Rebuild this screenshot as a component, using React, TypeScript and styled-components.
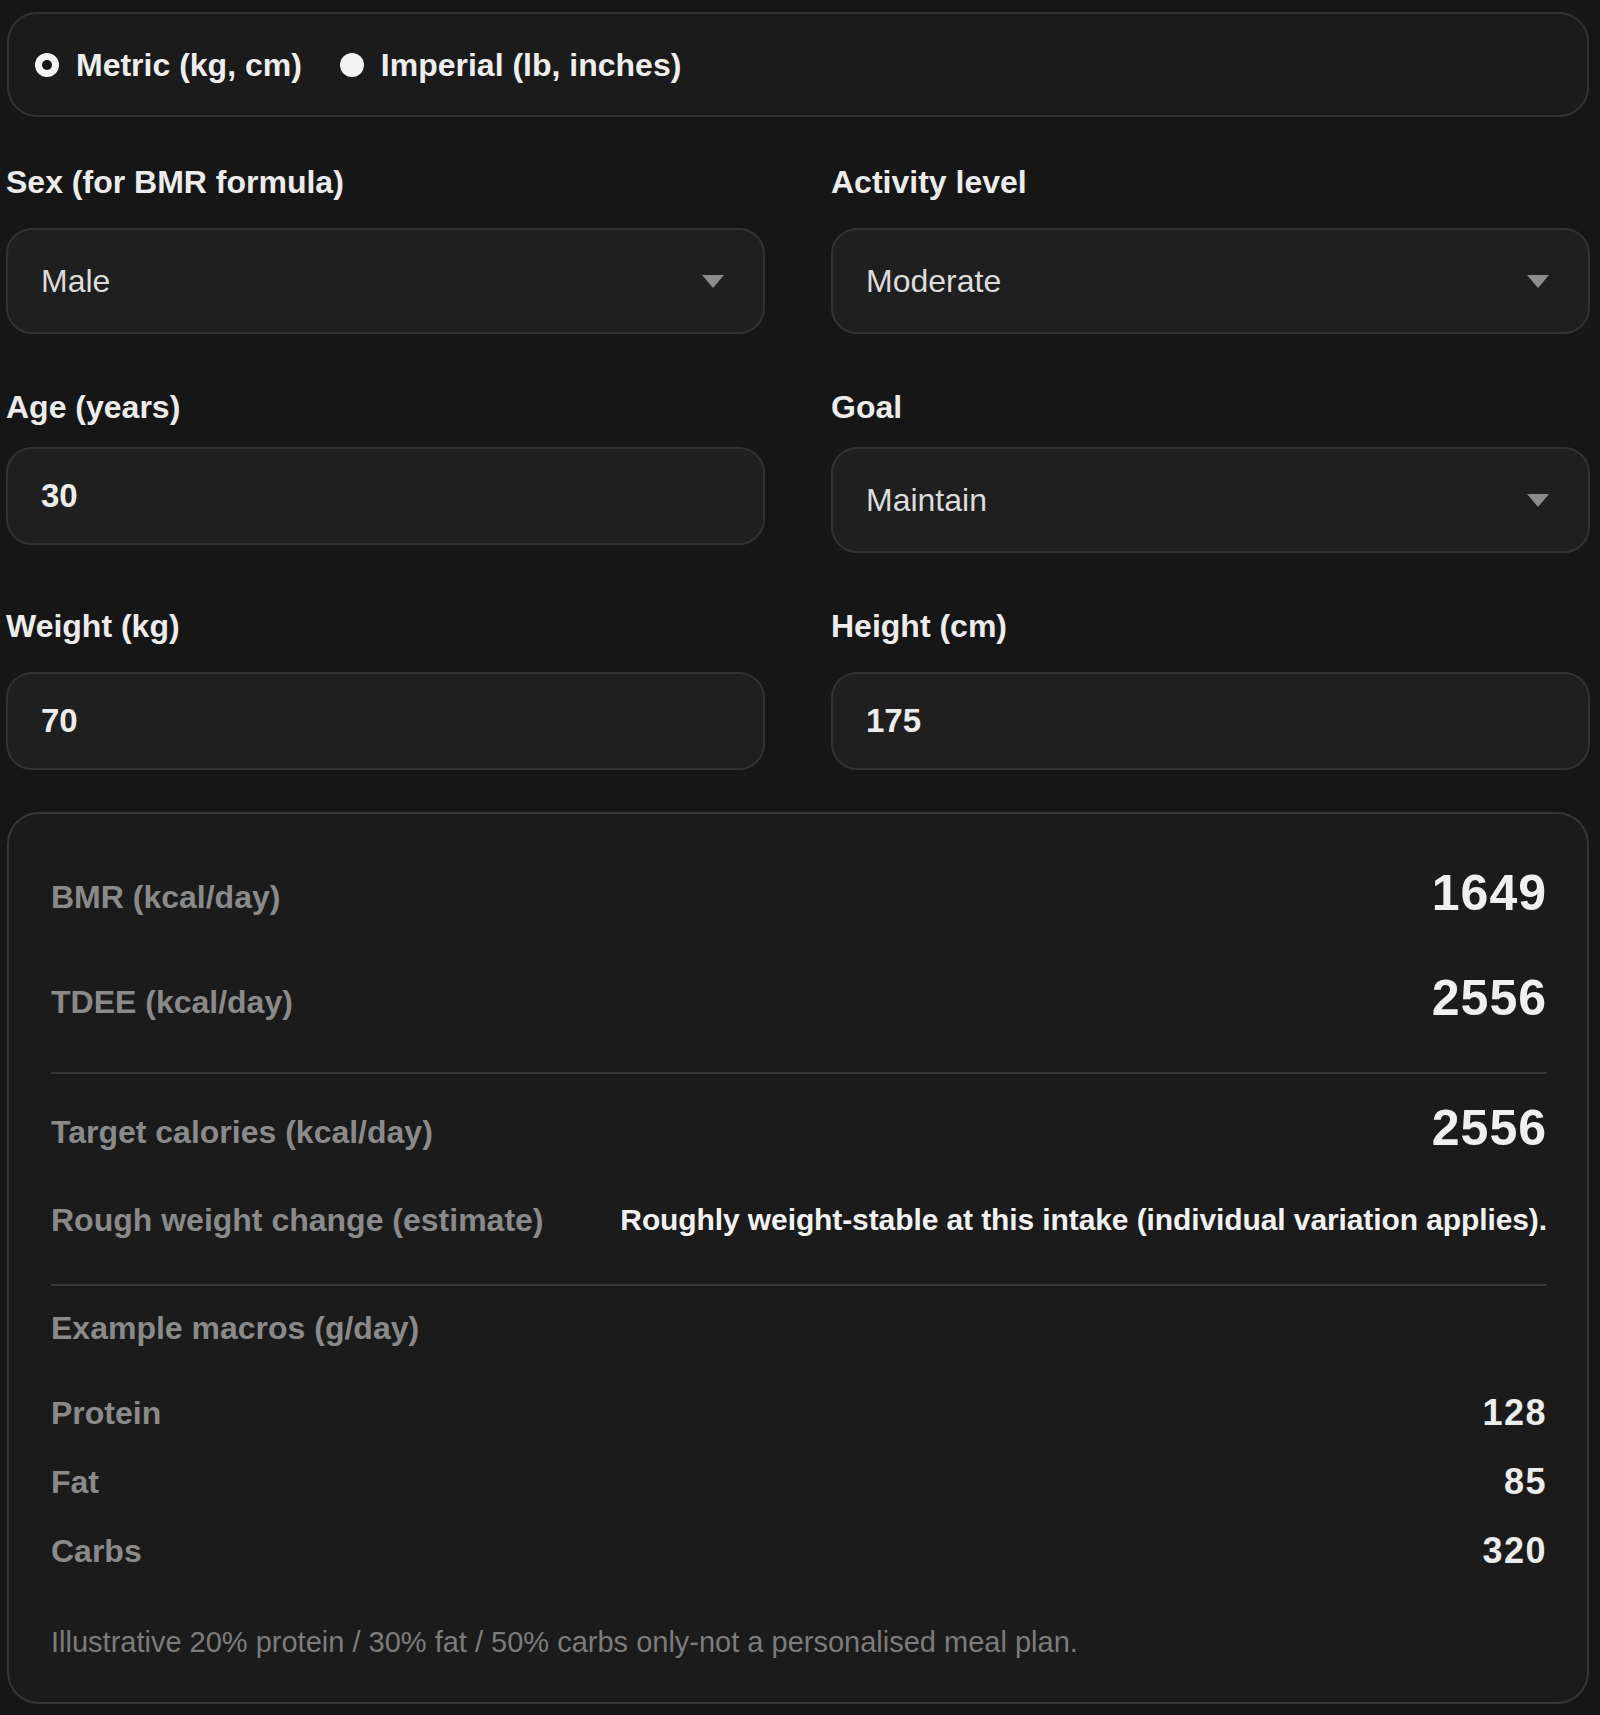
import React from "react";
import styled, { createGlobalStyle } from "styled-components";

const GlobalStyle = createGlobalStyle`
  html, body {
    margin: 0;
    padding: 0;
    background: #161616;
  }
  body {
    font-family: "Liberation Sans", Arial, sans-serif;
    color: #ececec;
    -webkit-font-smoothing: antialiased;
  }
  * { box-sizing: border-box; }
`;

const Page = styled.div`
  width: 1590px;
  min-height: 1715px;
  padding: 12px 0 0 6px;
  display: flex;
  flex-direction: column;
`;

const UnitBar = styled.div`
  height: 105px;
  margin-left: 1px;
  width: 1582px;
  border: 2px solid #333333;
  border-radius: 30px;
  background: #1b1b1b;
  display: flex;
  align-items: center;
  padding: 0 26px;
`;

const RadioOption = styled.label<{ $first?: boolean }>`
  display: flex;
  align-items: center;
  gap: 17px;
  margin-left: ${(p) => (p.$first ? "0" : "38px")};
  font-size: 32px;
  font-weight: 700;
  line-height: 40px;
  color: #eeeeee;
  cursor: pointer;
`;

const RadioDot = styled.span<{ $checked?: boolean }>`
  width: 24px;
  height: 24px;
  border-radius: 50%;
  background: #f4f4f4;
  display: flex;
  align-items: center;
  justify-content: center;
  &::after {
    content: "";
    width: 10px;
    height: 10px;
    border-radius: 50%;
    background: ${(p) => (p.$checked ? "#141414" : "transparent")};
  }
`;

const FieldGrid = styled.div`
  margin-top: 45px;
  display: grid;
  grid-template-columns: 759px 759px;
  column-gap: 66px;
  row-gap: 53px;
  align-items: start;
`;

const Field = styled.div<{ $tight?: boolean }>`
  display: flex;
  flex-direction: column;
  gap: ${(p) => (p.$tight ? "20px" : "26px")};
`;

const FieldLabel = styled.div`
  font-size: 32px;
  font-weight: 700;
  line-height: 40px;
  color: #ececec;
`;

const SelectBox = styled.div`
  height: 106px;
  border: 2px solid #323232;
  border-radius: 26px;
  background: #1f1f1f;
  display: flex;
  align-items: center;
  justify-content: space-between;
  padding: 0 39px 0 33px;
  font-size: 32px;
  font-weight: 400;
  color: #dcdcdc;
`;

const Caret = styled.svg`
  width: 22px;
  height: 13px;
  flex: none;
`;

const NumberInput = styled.input`
  height: 98px;
  width: 100%;
  border: 2px solid #323232;
  border-radius: 26px;
  background: #1f1f1f;
  padding: 0 33px;
  font-family: "Liberation Sans", Arial, sans-serif;
  font-size: 33px;
  font-weight: 700;
  color: #ececec;
  outline: none;
`;

const ResultCard = styled.div`
  margin-top: 42px;
  margin-left: 1px;
  width: 1582px;
  border: 2px solid #363636;
  border-radius: 32px;
  background: #1b1b1b;
  padding: 48px 40px 42px 42px;
  display: flex;
  flex-direction: column;
`;

const StatRow = styled.div<{ $gapTop?: number }>`
  height: 70px;
  margin-top: ${(p) => p.$gapTop ?? 0}px;
  display: flex;
  align-items: center;
  justify-content: space-between;
`;

const MutedLabel = styled.span`
  font-size: 32px;
  font-weight: 700;
  line-height: 40px;
  color: #8a8a8a;
`;

const BigValue = styled.span`
  font-size: 50px;
  font-weight: 700;
  line-height: 60px;
  letter-spacing: 1px;
  color: #f0f0f0;
  margin-top: -8px;
`;

const InfoRow = styled.div<{ $gapTop?: number }>`
  height: 40px;
  margin-top: ${(p) => p.$gapTop ?? 0}px;
  display: flex;
  align-items: center;
  justify-content: space-between;
`;

const InfoValue = styled.span`
  font-size: 30px;
  font-weight: 700;
  line-height: 40px;
  letter-spacing: -0.1px;
  color: #f2f2f2;
`;

const Divider = styled.hr<{ $above: number; $below: number }>`
  border: none;
  height: 2px;
  background: #363636;
  margin: ${(p) => p.$above}px 0 ${(p) => p.$below}px;
`;

const MacroList = styled.div`
  margin-top: 45px;
  display: flex;
  flex-direction: column;
  gap: 29px;
`;

const MacroValue = styled.span`
  font-size: 36px;
  font-weight: 700;
  line-height: 40px;
  letter-spacing: 1.5px;
  color: #ececec;
`;

const Note = styled.p`
  margin: 53px 0 0;
  font-size: 29px;
  line-height: 36px;
  font-weight: 400;
  color: #7c7c7c;
`;

function DropTriangle() {
  return (
    <Caret viewBox="0 0 22 13" aria-hidden>
      <path d="M0 0 L22 0 L11 13 Z" fill="#8c8c8c" />
    </Caret>
  );
}

const selects = {
  sex: "Male",
  activity: "Moderate",
  goal: "Maintain",
};

const macros = [
  { name: "Protein", value: 128 },
  { name: "Fat", value: 85 },
  { name: "Carbs", value: 320 },
];

export default function App() {
  return (
    <>
      <GlobalStyle />
      <Page>
        <UnitBar>
          <RadioOption $first>
            <RadioDot $checked />
            Metric (kg, cm)
          </RadioOption>
          <RadioOption>
            <RadioDot />
            Imperial (lb, inches)
          </RadioOption>
        </UnitBar>

        <FieldGrid>
          <Field>
            <FieldLabel>Sex (for BMR formula)</FieldLabel>
            <SelectBox>
              {selects.sex}
              <DropTriangle />
            </SelectBox>
          </Field>
          <Field>
            <FieldLabel>Activity level</FieldLabel>
            <SelectBox>
              {selects.activity}
              <DropTriangle />
            </SelectBox>
          </Field>
          <Field $tight>
            <FieldLabel>Age (years)</FieldLabel>
            <NumberInput type="text" defaultValue="30" readOnly />
          </Field>
          <Field $tight>
            <FieldLabel>Goal</FieldLabel>
            <SelectBox>
              {selects.goal}
              <DropTriangle />
            </SelectBox>
          </Field>
          <Field>
            <FieldLabel>Weight (kg)</FieldLabel>
            <NumberInput type="text" defaultValue="70" readOnly />
          </Field>
          <Field>
            <FieldLabel>Height (cm)</FieldLabel>
            <NumberInput type="text" defaultValue="175" readOnly />
          </Field>
        </FieldGrid>

        <ResultCard>
          <StatRow>
            <MutedLabel>BMR (kcal/day)</MutedLabel>
            <BigValue>1649</BigValue>
          </StatRow>
          <StatRow $gapTop={35}>
            <MutedLabel>TDEE (kcal/day)</MutedLabel>
            <BigValue>2556</BigValue>
          </StatRow>
          <Divider $above={35} $below={23} />
          <StatRow>
            <MutedLabel>Target calories (kcal/day)</MutedLabel>
            <BigValue>2556</BigValue>
          </StatRow>
          <InfoRow $gapTop={33}>
            <MutedLabel>Rough weight change (estimate)</MutedLabel>
            <InfoValue>
              Roughly weight-stable at this intake (individual variation applies).
            </InfoValue>
          </InfoRow>
          <Divider $above={44} $below={22} />
          <InfoRow>
            <MutedLabel>Example macros (g/day)</MutedLabel>
          </InfoRow>
          <MacroList>
            {macros.map((m) => (
              <InfoRow key={m.name}>
                <MutedLabel>{m.name}</MutedLabel>
                <MacroValue>{m.value}</MacroValue>
              </InfoRow>
            ))}
          </MacroList>
          <Note>
            Illustrative 20% protein / 30% fat / 50% carbs only-not a personalised meal plan.
          </Note>
        </ResultCard>
      </Page>
    </>
  );
}
